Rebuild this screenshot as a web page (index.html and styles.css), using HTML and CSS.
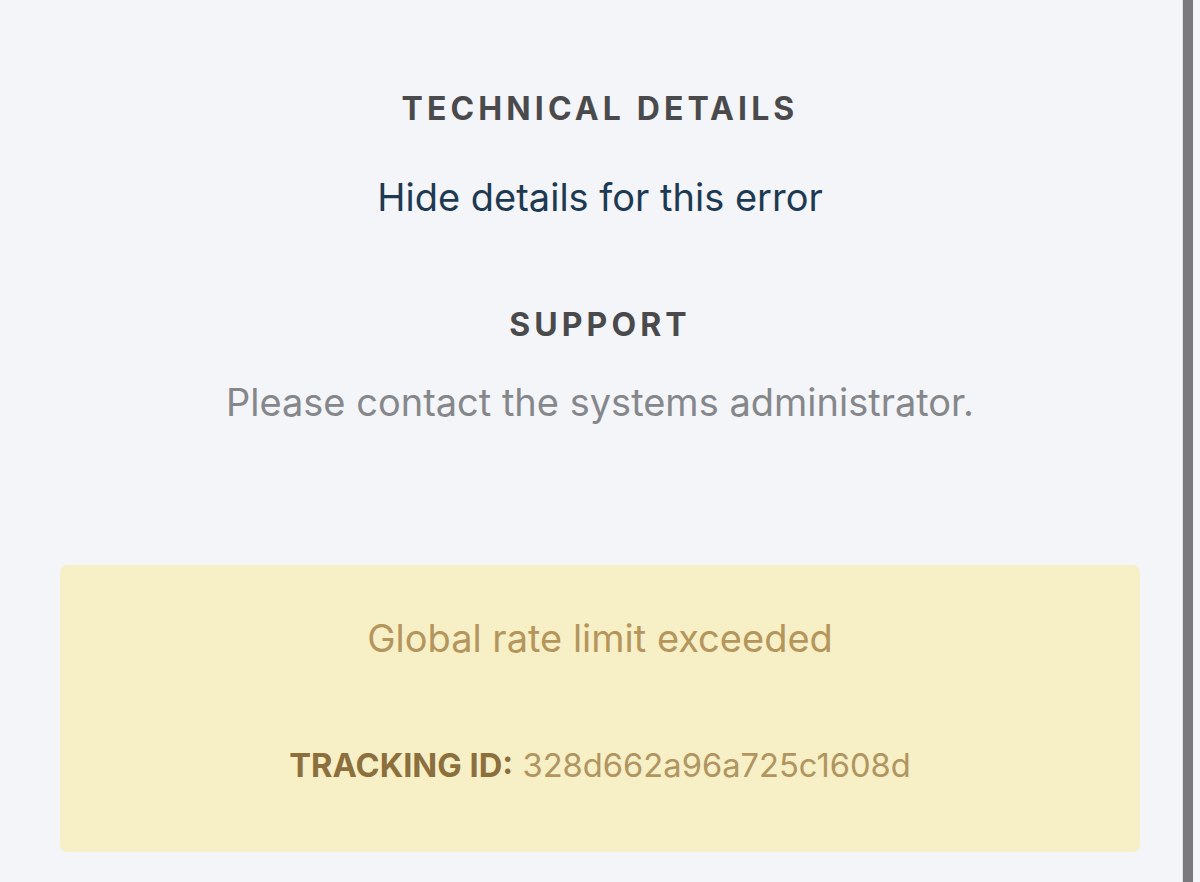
FILE: index.html
```html
<!DOCTYPE html>
<html lang="en">
<head>
<meta charset="utf-8">
<title>Error</title>
<link rel="stylesheet" href="styles.css">
</head>
<body>
<main class="page">
  <section class="section section-tech">
    <h2 class="section-title">TECHNICAL DETAILS</h2>
    <a class="details-link" href="#">Hide details for this error</a>
  </section>
  <section class="section section-support">
    <h2 class="section-title">SUPPORT</h2>
    <p class="support-text">Please contact the systems administrator.</p>
  </section>
  <div class="alert">
    <p class="alert-message">Global rate limit exceeded</p>
    <p class="alert-tracking"><strong class="tracking-label">TRACKING ID:</strong> <span class="tracking-value">328d662a96a725c1608d</span></p>
  </div>
</main>
<div class="scrollbar"></div>
</body>
</html>
```
FILE: styles.css
```css
html, body {
  margin: 0;
  padding: 0;
}
body {
  background: #f3f5f9;
  height: 882px;
  overflow: hidden;
  font-family: Inter, "Noto Sans", "Liberation Sans", sans-serif;
}
.page {
  display: flex;
  flex-direction: column;
  align-items: stretch;
  padding: 89px 60px 0 60px;
}
.section {
  display: flex;
  flex-direction: column;
  align-items: center;
  text-align: center;
}
.section-title {
  margin: 0;
  font-size: 32px;
  line-height: 40px;
  font-weight: 700;
  letter-spacing: 4.1px;
  color: #4a4a4c;
}
.details-link {
  margin-top: 44px;
  font-size: 38px;
  line-height: 48px;
  color: #1d3a52;
  text-decoration: none;
}
.section-support {
  margin-top: 84px;
}
.support-text {
  margin: 33px 0 0 0;
  font-size: 38px;
  line-height: 48px;
  color: #86878b;
}
.alert {
  margin-top: 139px;
  background: #f7efc6;
  border-radius: 7px;
  padding: 49px 20px 67px 20px;
  display: flex;
  flex-direction: column;
  align-items: center;
  text-align: center;
}
.alert-message {
  margin: 0;
  font-size: 38px;
  line-height: 48px;
  color: #b4965c;
}
.alert-tracking {
  margin: 83px 0 0 0;
  font-size: 32.7px;
  line-height: 40px;
}
.tracking-label {
  font-weight: 700;
  color: #8b6f3d;
}
.tracking-value {
  color: #b09560;
}
.scrollbar {
  position: fixed;
  top: 0;
  bottom: 0;
  left: 1182px;
  width: 10px;
  background: #7a7a7e;
  border-left: 1px solid #dcdde2;
}
```
